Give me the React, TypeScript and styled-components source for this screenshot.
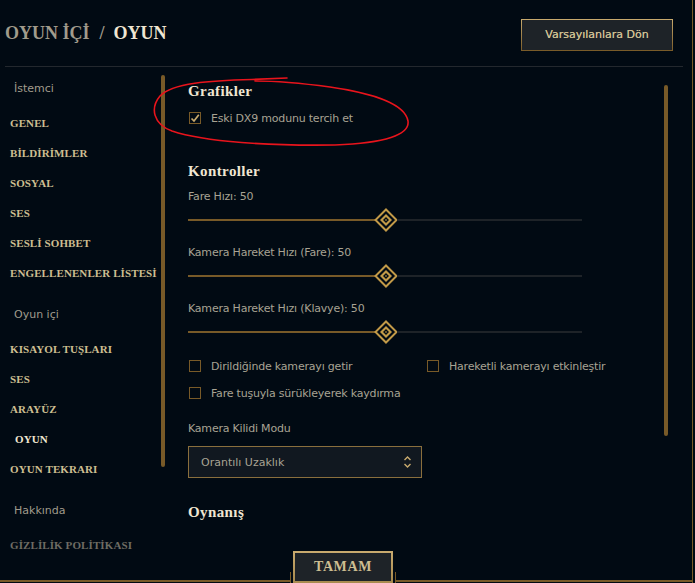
import React from "react";
import styled, { createGlobalStyle } from "styled-components";

const Global = createGlobalStyle`
  html, body { margin: 0; padding: 0; background: #010a13; }
  * { box-sizing: border-box; }
`;

const serif = `"Liberation Serif", "Times New Roman", serif`;
const sans = `"DejaVu Sans", Verdana, sans-serif`;

const Root = styled.div`
  position: relative;
  width: 693px;
  height: 583px;
  border-right: 1px solid #785a28;
  background: #010a13;
  display: flex;
  flex-direction: column;
  overflow: hidden;
`;

const Header = styled.header`
  height: 66px;
  display: flex;
  align-items: center;
  justify-content: space-between;
  padding: 0 19px 0 5px;
`;

const Title = styled.h1`
  margin: 0;
  font-family: ${serif};
  font-weight: 700;
  font-size: 18px;
  line-height: 1;
  color: #a09b8c;
  display: flex;
  align-items: center;
`;

const Slash = styled.span`
  margin: 0 9px 0 10px;
`;

const Current = styled.span`
  color: #f0e6d2;
`;

const ResetButton = styled.button`
  margin-top: 3px;
  width: 152px;
  height: 32px;
  background: #1e2328;
  border: 1px solid;
  border-image: linear-gradient(#c8aa6e, #785a28) 1;
  color: #cdbe91;
  font-family: ${sans};
  font-size: 11px;
  letter-spacing: 0;
  text-shadow: 0 0 0.4px #cdbe91;
  padding: 0;
`;

const Divider = styled.div`
  height: 1px;
  margin: 0 9px 0 5px;
  background: #23282e;
`;

const Main = styled.div`
  height: 484px;
  display: flex;
  overflow: hidden;
`;

const Sidebar = styled.nav`
  width: 161px;
  padding: 7px 0 0 10px;
  display: flex;
  flex-direction: column;
`;

const Category = styled.div<{ $first?: boolean }>`
  font-family: ${sans};
  font-size: 11px;
  line-height: 30px;
  color: #a09b8c;
  padding-left: 4px;
  margin-top: ${(p) => (p.$first ? 0 : 12)}px;
  margin-bottom: 4px;
`;

const NavItem = styled.div<{ $active?: boolean; $muted?: boolean }>`
  font-family: ${serif};
  font-weight: 700;
  font-size: 11px;
  letter-spacing: 0.1px;
  line-height: 30px;
  white-space: nowrap;
  color: ${(p) => (p.$active ? "#f0e6d2" : p.$muted ? "#6e6c63" : "#cdbe91")};
  padding-left: ${(p) => (p.$active ? 5 : 0)}px;
`;

const Thumb = styled.div<{ $top: number; $height: number }>`
  width: 4px;
  margin-top: ${(p) => p.$top}px;
  height: ${(p) => p.$height}px;
  border-radius: 2px;
  background: #785a28;
  flex-shrink: 0;
`;

const Content = styled.section`
  flex: 1;
  margin-left: 23px;
  padding-top: 14px;
  display: flex;
  flex-direction: column;
  align-items: flex-start;
`;

const Heading = styled.h2<{ $mt?: number }>`
  margin: ${(p) => p.$mt ?? 0}px 0 0;
  font-family: ${serif};
  font-weight: 700;
  font-size: 15px;
  letter-spacing: 0.4px;
  line-height: 20px;
  color: #f0e6d2;
`;

const Label = styled.div<{ $mt?: number }>`
  margin-top: ${(p) => p.$mt ?? 0}px;
  font-family: ${sans};
  font-size: 11px;
  letter-spacing: -0.2px;
  line-height: 16px;
  color: #a8a393;
`;

const CheckRow = styled.label<{ $mt?: number; $width?: number }>`
  margin-top: ${(p) => p.$mt ?? 0}px;
  width: ${(p) => (p.$width ? `${p.$width}px` : "auto")};
  height: 20px;
  display: flex;
  align-items: center;
  gap: 10px;
  padding-left: 1px;
  font-family: ${sans};
  font-size: 11px;
  letter-spacing: -0.2px;
  color: #a8a393;
`;

const Box = styled.span`
  width: 12px;
  height: 12px;
  border: 1px solid #785a28;
  display: flex;
  align-items: center;
  justify-content: center;
  flex-shrink: 0;
`;

const CheckGrid = styled.div`
  margin-top: 12px;
  display: flex;
  flex-direction: column;
  gap: 7px;
`;

const CheckLine = styled.div`
  display: flex;
`;

const SliderRow = styled.div`
  margin-top: 3px;
  width: 394px;
  height: 24px;
  display: flex;
  align-items: center;
`;

const Fill = styled.div`
  height: 2px;
  background: #785a28;
`;

const Rest = styled.div`
  flex: 1;
  height: 2px;
  background: #1e2328;
`;

const Knob = styled.svg`
  width: 24px;
  height: 24px;
  margin: 0 -1px;
  flex-shrink: 0;
`;

const Select = styled.div`
  margin-top: 9px;
  width: 234px;
  height: 32px;
  border: 1px solid #8a6f3d;
  background: #111820;
  display: flex;
  align-items: center;
  justify-content: space-between;
  padding: 0 9px 0 12px;
  font-family: ${sans};
  font-size: 11px;
  color: #a8a393;
`;

const Footer = styled.footer`
  position: relative;
  height: 32px;
  display: flex;
  align-items: flex-end;
  padding-left: 290px;
  &::after {
    content: "";
    position: absolute;
    left: 0;
    right: 0;
    bottom: 1px;
    height: 2px;
    background: #785a28;
  }
`;

const ButtonFrame = styled.div`
  position: relative;
  z-index: 1;
  padding: 0 3px;
  background: #010a13;
  display: flex;
  &::before,
  &::after {
    content: "";
    position: absolute;
    bottom: 0;
    width: 1px;
    height: 11px;
    background: #785a28;
  }
  &::before { left: 0; }
  &::after { right: 0; }
`;

const OkButton = styled.button`
  width: 100px;
  height: 32px;
  background: #1e2328;
  border: 2px solid;
  border-image: linear-gradient(#c8aa6e, #a88a4e) 1;
  color: #cdbe91;
  font-family: ${serif};
  font-weight: 700;
  font-size: 14px;
  letter-spacing: 0.6px;
  padding: 0;
`;

const Annotation = styled.svg`
  position: absolute;
  left: 0;
  top: 0;
  width: 695px;
  height: 583px;
  pointer-events: none;
`;

const Check = ({ checked }: { checked?: boolean }) => (
  <Box>
    {checked && (
      <svg width="10" height="10" viewBox="0 0 10 10">
        <path d="M1.5 5.5 L4 8 L8.8 1.8" fill="none" stroke="#c8aa6e" strokeWidth="1.7" />
      </svg>
    )}
  </Box>
);

const Slider = ({ value }: { value: number }) => (
  <SliderRow>
    <Fill style={{ width: `${(value / 100) * 394 - 10}px` }} />
    <Knob viewBox="0 0 24 24">
      <path d="M12 1.5 L22.5 12 L12 22.5 L1.5 12 Z" fill="#010a13" stroke="#c29a48" strokeWidth="2" />
      <path d="M12 6 L18 12 L12 18 L6 12 Z" fill="#c29a48" />
      <path d="M12 9 L15 12 L12 15 L9 12 Z" fill="#010a13" />
      <path d="M12 11 L13 12 L12 13 L11 12 Z" fill="#c29a48" />
    </Knob>
    <Rest />
  </SliderRow>
);

export default function App() {
  return (
    <>
      <Global />
      <Root>
        <Header>
          <Title>
            OYUN İÇİ<Slash>/</Slash>
            <Current>OYUN</Current>
          </Title>
          <ResetButton>Varsayılanlara Dön</ResetButton>
        </Header>
        <Divider />
        <Main>
          <Sidebar>
            <Category $first>İstemci</Category>
            <NavItem>GENEL</NavItem>
            <NavItem>BİLDİRİMLER</NavItem>
            <NavItem>SOSYAL</NavItem>
            <NavItem>SES</NavItem>
            <NavItem>SESLİ SOHBET</NavItem>
            <NavItem>ENGELLENENLER LİSTESİ</NavItem>
            <Category>Oyun içi</Category>
            <NavItem>KISAYOL TUŞLARI</NavItem>
            <NavItem>SES</NavItem>
            <NavItem>ARAYÜZ</NavItem>
            <NavItem $active>OYUN</NavItem>
            <NavItem>OYUN TEKRARI</NavItem>
            <Category>Hakkında</Category>
            <NavItem $muted>GİZLİLİK POLİTİKASI</NavItem>
          </Sidebar>
          <Thumb $top={8} $height={392} />
          <Content>
            <Heading>Grafikler</Heading>
            <CheckRow $mt={7}>
              <Check checked />
              Eski DX9 modunu tercih et
            </CheckRow>
            <Heading $mt={33}>Kontroller</Heading>
            <Label $mt={8}>Fare Hızı: 50</Label>
            <Slider value={50} />
            <Label $mt={13}>Kamera Hareket Hızı (Fare): 50</Label>
            <Slider value={50} />
            <Label $mt={13}>Kamera Hareket Hızı (Klavye): 50</Label>
            <Slider value={50} />
            <CheckGrid>
              <CheckLine>
                <CheckRow $width={238}>
                  <Check />
                  Dirildiğinde kamerayı getir
                </CheckRow>
                <CheckRow>
                  <Check />
                  Hareketli kamerayı etkinleştir
                </CheckRow>
              </CheckLine>
              <CheckLine>
                <CheckRow>
                  <Check />
                  Fare tuşuyla sürükleyerek kaydırma
                </CheckRow>
              </CheckLine>
            </CheckGrid>
            <Label $mt={18}>Kamera Kilidi Modu</Label>
            <Select>
              Orantılı Uzaklık
              <svg width="9" height="14" viewBox="0 0 9 14">
                <path d="M1.5 5 L4.5 2 L7.5 5" fill="none" stroke="#c8aa6e" strokeWidth="1.4" />
                <path d="M1.5 9 L4.5 12 L7.5 9" fill="none" stroke="#c8aa6e" strokeWidth="1.4" />
              </svg>
            </Select>
            <Heading $mt={24}>Oynanış</Heading>
          </Content>
          <Thumb $top={18} $height={351} style={{ marginRight: "24px" }} />
        </Main>
        <Footer>
          <ButtonFrame>
            <OkButton>TAMAM</OkButton>
          </ButtonFrame>
        </Footer>
        <Annotation viewBox="0 0 695 583">
          <path
            d="M287 78 L252 79.5 C210 80.5 172 83 160 96 C150 108 153 124 172 131 C205 142 270 146 335 145 C385 143 410 135 408 121 C405 104 372 93 330 87 C300 83 275 81 255 81"
            fill="none"
            stroke="#e8141c"
            strokeWidth="1.6"
            strokeLinecap="round"
          />
        </Annotation>
      </Root>
    </>
  );
}
